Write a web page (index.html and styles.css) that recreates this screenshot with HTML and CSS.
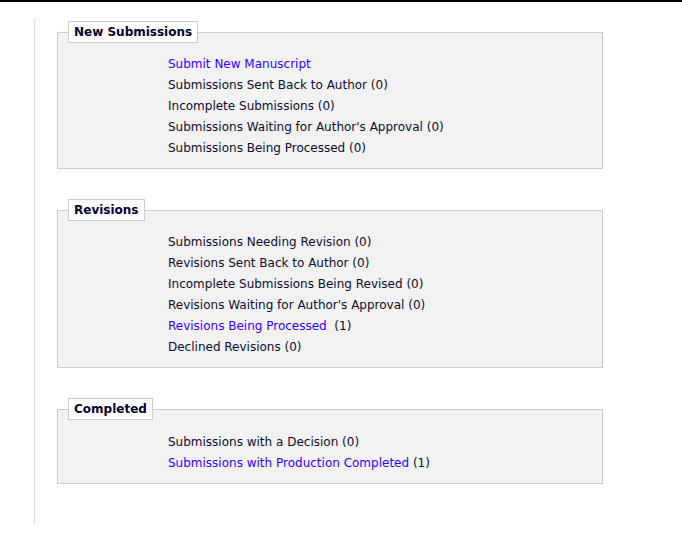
FILE: index.html
```html
<!DOCTYPE html>
<html>
<head>
<meta charset="utf-8">
<link rel="stylesheet" href="styles.css">
</head>
<body>
<div class="topbar"></div>
<div class="main">
  <fieldset class="group">
    <legend class="group-title">New Submissions</legend>
    <ul class="items">
      <li><a class="link" href="#">Submit New Manuscript</a></li>
      <li>Submissions Sent Back to Author (0)</li>
      <li>Incomplete Submissions (0)</li>
      <li>Submissions Waiting for Author's Approval (0)</li>
      <li>Submissions Being Processed (0)</li>
    </ul>
  </fieldset>
  <fieldset class="group">
    <legend class="group-title">Revisions</legend>
    <ul class="items">
      <li>Submissions Needing Revision (0)</li>
      <li>Revisions Sent Back to Author (0)</li>
      <li>Incomplete Submissions Being Revised (0)</li>
      <li>Revisions Waiting for Author's Approval (0)</li>
      <li><a class="link" href="#">Revisions Being Processed</a> &nbsp;(1)</li>
      <li>Declined Revisions (0)</li>
    </ul>
  </fieldset>
  <fieldset class="group">
    <legend class="group-title">Completed</legend>
    <ul class="items">
      <li>Submissions with a Decision (0)</li>
      <li><a class="link" href="#">Submissions with Production Completed</a> (1)</li>
    </ul>
  </fieldset>
</div>
</body>
</html>
```
FILE: styles.css
```css
html, body {
  margin: 0;
  padding: 0;
  background: #ffffff;
}
body {
  font-family: "DejaVu Sans", Verdana, sans-serif;
  font-size: 12px;
  color: #0d0d33;
}
.topbar {
  height: 2px;
  background: #000000;
}
.main {
  margin: 18px 0 0 34px;
  width: 568px;
  border-left: 1px dotted #bbbbbb;
  padding: 1px 0 39px 22px;
}
.group {
  margin: 0 0 30px 0;
  padding: 0 0 9px 0;
  width: 544px;
  border: 1px solid #cccccc;
  background: #f2f2f2;
}
.group:last-child {
  margin-bottom: 0;
}
.group:last-child .items {
  margin-top: 12px;
}
.group-title {
  margin-left: 10px;
  padding: 0 5px 0 5px;
  border: 1px solid #cccccc;
  background: #ffffff;
  font-weight: bold;
  line-height: 20px;
  color: #000033;
}
.items {
  list-style: none;
  margin: 11px 0 0 0;
  padding: 0 0 0 110px;
}
.items li {
  line-height: 21px;
}
.link {
  color: #3300ff;
  text-decoration: none;
}
```
